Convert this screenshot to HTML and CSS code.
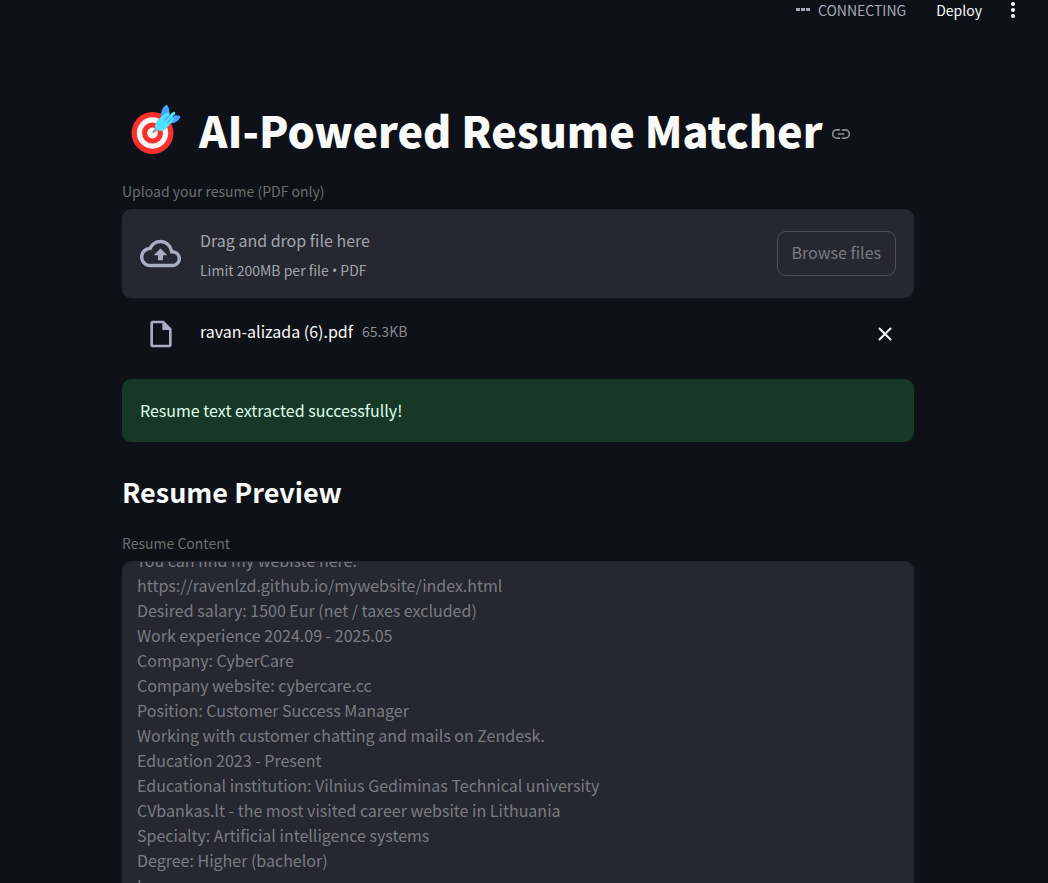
FILE: index.html
```html
<!DOCTYPE html>
<html lang="en">
<head>
<meta charset="utf-8">
<meta name="viewport" content="width=device-width, initial-scale=1">
<title>AI-Powered Resume Matcher</title>
<link rel="stylesheet" href="styles.css">
</head>
<body>
<header class="toolbar">
  <div class="status" role="status">
    <svg class="status-dots" viewBox="0 0 14 4" aria-hidden="true"><path d="M0 0h4v3H0zM5 0h4v3H5zM10 0h4v3h-4z"/></svg>
    <span>CONNECTING</span>
  </div>
  <button class="deploy" type="button">Deploy</button>
  <button class="menu" type="button" aria-label="Main menu">
    <svg viewBox="0 0 4 16" aria-hidden="true"><circle cx="2" cy="2" r="2"/><circle cx="2" cy="8" r="2"/><circle cx="2" cy="14" r="2"/></svg>
  </button>
</header>

<main class="scroller">
<div class="page">
  <h1 class="title" id="matcher">
    <svg class="target" viewBox="0 0 60 60" aria-hidden="true">
      <circle cx="27.500" cy="34" r="21" fill="#f8312f"/>
      <circle cx="27.500" cy="34" r="15.700" fill="#f4f4f4"/>
      <circle cx="27.500" cy="34" r="10.500" fill="#f8312f"/>
      <circle cx="27.500" cy="34" r="5.400" fill="#f4f4f4"/>
      <path d="M28.500 32.800l6-5.300" stroke="#9b9b9b" stroke-width="2.400" stroke-linecap="round"/>
      <path d="M36 20c-.8-5 .8-11 4.500-13.500 1-.7 1.800-.5 2.300.5 1.200 2.500 1.700 5 1.700 8l-4 6zM44 23l5.500-6.500c2-.6 4-.2 5.300.6.700.4.700 1 .2 1.800-2.500 4-6.500 6-12.500 5.500z" fill="#46a4fb"/>
      <path d="M29.800 27C31 22 35.500 18 41.500 13.800c2-.8 3.500.6 3 2.400L48 13c1.600-1 2.900.4 2 1.900L47.300 18.200c1.500-.4 2.300.9 1.300 2.300C44.500 26.500 40 32 35 32c-2 0-5.500-3-5.200-5z" fill="#50e2ff"/>
      <path d="M39.500 21.500l5.200-5.500M42.500 23.800l4.800-5.400" stroke="#46a4fb" stroke-width="1.200"/>
    </svg>
    <span>AI-Powered Resume Matcher</span>
    <a class="anchor" href="#matcher" aria-label="Link to heading">
      <svg viewBox="0 0 24 24" aria-hidden="true"><path d="M11 7H7a5 5 0 0 0 0 10h4M13 7h4a5 5 0 0 1 0 10h-4M8 12h8" fill="none" stroke="currentColor" stroke-width="2"/></svg>
    </a>
  </h1>

  <p class="label" id="upload-label">Upload your resume (PDF only)</p>
  <section class="dropzone" aria-labelledby="upload-label">
    <svg class="cloud" viewBox="0 0 24 24" aria-hidden="true"><path d="M19.350 10.040A7.490 7.490 0 0 0 12 4C9.110 4 6.600 5.640 5.350 8.040A5.994 5.994 0 0 0 0 14c0 3.310 2.690 6 6 6h13c2.760 0 5-2.240 5-5 0-2.640-2.050-4.780-4.650-4.960zM19 18H6c-2.210 0-4-1.790-4-4 0-2.050 1.530-3.760 3.560-3.970l1.070-.11.5-.95A5.469 5.469 0 0 1 12 6c2.620 0 4.880 1.860 5.390 4.430l.3 1.500 1.530.11A2.980 2.980 0 0 1 22 15c0 1.650-1.350 3-3 3zM8 13h2.550v3h2.900v-3H16l-4-4z"/></svg>
    <div class="drop-text">
      <span class="drop-title">Drag and drop file here</span>
      <span class="drop-limit">Limit 200MB per file <span class="bullet">•</span> PDF</span>
    </div>
    <button class="browse" type="button" disabled>Browse files</button>
  </section>

  <div class="file">
    <svg class="file-icon" viewBox="0 0 24 24" aria-hidden="true"><path d="M14 2H6c-1.100 0-2 .9-2 2v16c0 1.100.9 2 2 2h12c1.100 0 2-.9 2-2V8l-6-6zM6 20V4h7v5h5v11H6z"/></svg>
    <div class="file-info">
      <span class="file-name">ravan-alizada (6).pdf</span>
      <span class="file-size">65.3KB</span>
    </div>
    <button class="remove" type="button" aria-label="Remove file">
      <svg viewBox="0 0 14 14" aria-hidden="true"><path d="M1.500 1.500l11 11M12.500 1.500l-11 11" stroke="currentColor" stroke-width="2" stroke-linecap="round"/></svg>
    </button>
  </div>

  <div class="success" role="alert">Resume text extracted successfully!</div>

  <h2 class="subtitle">Resume Preview</h2>

  <label class="label" for="resume">Resume Content</label>
  <textarea class="resume" id="resume" disabled>Phone and email are listed above.
You can find my webiste here:
https://ravenlzd.github.io/mywebsite/index.html
Desired salary: 1500 Eur (net / taxes excluded)
Work experience 2024.09 - 2025.05
Company: CyberCare
Company website: cybercare.cc
Position: Customer Success Manager
Working with customer chatting and mails on Zendesk.
Education 2023 - Present
Educational institution: Vilnius Gediminas Technical university
CVbankas.lt - the most visited career website in Lithuania
Specialty: Artificial intelligence systems
Degree: Higher (bachelor)
Languages


</textarea>
</div>
</main>
<script src="script.js"></script>
</body>
</html>
```
FILE: styles.css
```css
* {
  box-sizing: border-box;
}

body {
  display: flex;
  flex-direction: column;
  height: 100vh;
  margin: 0;
  background: #0e1117;
  color: #fafafa;
  font-family: "Noto Sans CJK SC", "Noto Sans", sans-serif;
  font-size: 16px;
  line-height: 24px;
}

button,
textarea {
  font: inherit;
}

button {
  padding: 0;
  border: 0;
  background: none;
  color: inherit;
}

svg {
  display: block;
  flex: none;
  fill: currentColor;
}

.toolbar {
  display: flex;
  flex: none;
  align-items: center;
  justify-content: flex-end;
  height: 20px;
  padding-right: 33px;
  font-size: 14px;
  line-height: 20px;
}

.status {
  display: flex;
  align-items: center;
  gap: 8px;
  margin-right: 30px;
  color: #a3a8b8;
}

.status-dots {
  width: 14px;
  height: 4px;
}

.deploy {
  margin-right: 29px;
}

.menu svg {
  width: 4px;
  height: 16px;
}

.scroller {
  flex: 1;
  min-height: 0;
  padding-right: 12px;
  overflow-y: auto;
  scrollbar-width: none;
}

.page {
  max-width: 828px;
  margin: 0 auto;
  padding: 79px 18px 80px;
}

.title {
  display: flex;
  align-items: center;
  margin: 0 0 20px;
  font-size: 43px;
  font-weight: 900;
  line-height: 60px;
  white-space: nowrap;
}

.target {
  width: 60px;
  height: 60px;
  margin: 0 14px 0 3px;
}

.anchor {
  margin: 10px 0 0 8px;
  color: #8b8c90;
}

.anchor svg {
  width: 20px;
  height: 20px;
}

.label {
  display: block;
  margin: 0 0 6px;
  color: #6c6e72;
  font-size: 14px;
  line-height: 24px;
}

.dropzone {
  display: flex;
  align-items: center;
  height: 89px;
  padding: 0 18px;
  border-radius: 9px;
  background: #262730;
}

.cloud {
  width: 41px;
  height: 41px;
  margin-right: 19px;
  color: #a9aec3;
}

.drop-text {
  display: flex;
  flex: 1;
  flex-direction: column;
  gap: 6px;
  padding-top: 4px;
  color: #a3a4ac;
}

.drop-limit {
  font-size: 14px;
}

.bullet {
  font-family: "Open Sans", sans-serif;
}

.browse {
  height: 45px;
  padding: 0 14px 4px;
  border: 1px solid #4c4d56;
  border-radius: 9px;
  color: #7b7c82;
}

.file {
  display: flex;
  align-items: center;
  height: 72px;
  margin-bottom: 9px;
  padding: 0 22px 0 23px;
}

.file-icon {
  width: 32px;
  height: 32px;
  margin-right: 23px;
  color: #a9aec3;
}

.file-info {
  display: flex;
  flex: 1;
  gap: 9px;
  padding-bottom: 6px;
}

.file-size {
  color: #8b8c92;
  font-size: 14px;
}

.remove svg {
  width: 14px;
  height: 14px;
}

.success {
  padding: 19px 18px 20px;
  border-radius: 9px;
  background: #183827;
  color: #dffde9;
}

.subtitle {
  margin: 30px 0 19px;
  font-size: 27px;
  line-height: 40px;
}

.resume {
  display: block;
  width: 100%;
  height: 338px;
  padding: 14px;
  border: 1px solid #262730;
  border-radius: 9px;
  background: #262730;
  color: #7b7c82;
  line-height: 25px;
  resize: none;
  scrollbar-width: none;
}
```
FILE: script.js
```js
const resume = document.getElementById("resume");
resume.scrollTop = 53;
```
